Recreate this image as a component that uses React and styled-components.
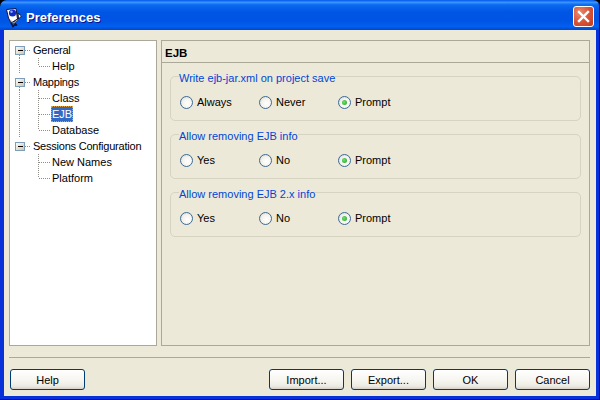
import React from 'react';
import styled, { createGlobalStyle } from 'styled-components';

const GlobalStyle = createGlobalStyle`
  html, body {
    margin: 0;
    padding: 0;
    background: #000;
    overflow: hidden;
  }
`;

const Window = styled.div`
  position: relative;
  width: 600px;
  height: 400px;
  display: flex;
  flex-direction: column;
  font-family: "Liberation Sans", Arial, sans-serif;
  font-size: 11px;
  color: #000;
  box-sizing: border-box;
  &::after {
    content: '';
    position: absolute;
    inset: 0;
    pointer-events: none;
    border-radius: 7px 7px 0 0;
    box-shadow: inset -1px -1px 0 #00138c;
  }
`;

const TitleBar = styled.div`
  height: 30px;
  flex: none;
  display: flex;
  align-items: center;
  padding: 3px 6px 0 6px;
  box-sizing: border-box;
  border-radius: 7px 7px 0 0;
  background: linear-gradient(180deg, #0058ee 0%, #3a93ff 8%, #0a6af0 16%, #0055e5 40%, #0054e3 70%, #0060f0 88%, #0046cf 100%);
`;

const TitleText = styled.div`
  margin-left: 4px;
  padding-top: 1px;
  flex: 1;
  color: #fff;
  font: bold 13px "Liberation Sans", Arial, sans-serif;
  text-shadow: 1px 1px 0 #0f1089;
`;

const CloseButton = styled.div`
  width: 21px;
  height: 21px;
  box-sizing: border-box;
  border: 1px solid #fff;
  border-radius: 3px;
  display: flex;
  align-items: center;
  justify-content: center;
  background: radial-gradient(circle at 30% 30%, #ec8a6c 0%, #d8553a 50%, #c23a1c 100%);
`;

const WindowBody = styled.div`
  flex: 1;
  display: flex;
  flex-direction: column;
  background: #ece9d8;
  border-style: solid;
  border-color: #0831d9;
  border-width: 0 4px 4px 4px;
  padding: 10px 6px 7px 5px;
  min-height: 0;
`;

const Panes = styled.div`
  display: flex;
  gap: 4px;
  height: 306px;
  flex: none;
`;

const TreePane = styled.div`
  width: 148px;
  flex: none;
  box-sizing: border-box;
  background: #fff;
  border: 1px solid #aca899;
  padding-top: 1px;
`;

const TreeRow = styled.div`
  display: flex;
  align-items: center;
  height: 16px;
`;

const TreeLabel = styled.span`
  padding: 1px 1px 0;
  height: 16px;
  line-height: 15px;
  box-sizing: border-box;
  white-space: nowrap;
  letter-spacing: ${(p) => (p.$parent ? '-0.22px' : '0')};
  ${(p) => p.$selected && `
    background: #316ac5;
    color: #fff;
    outline: 1px dotted #e0a040;
    outline-offset: -1px;
  `}
`;

const DetailPane = styled.div`
  flex: 1;
  display: flex;
  flex-direction: column;
  box-sizing: border-box;
  border: 1px solid #aca899;
  min-width: 0;
`;

const DetailHeader = styled.div`
  height: 22px;
  flex: none;
  box-sizing: border-box;
  border-bottom: 1px solid #aca899;
  padding: 1px 0 0 3px;
  line-height: 22px;
  font-weight: bold;
  font-size: 11.5px;
`;

const DetailContent = styled.div`
  display: flex;
  flex-direction: column;
  gap: 5px;
  padding: 5px 8px 0 8px;
`;

const Group = styled.fieldset`
  margin: 0;
  padding: 11px 0 0 9px;
  height: 53px;
  box-sizing: border-box;
  border: 1px solid #d6d3c0;
  border-radius: 5px;
  display: grid;
  grid-template-columns: repeat(3, 79px);
  align-items: start;
  align-content: start;
`;

const GroupTitle = styled.legend`
  padding: 4px 0 0;
  margin-left: -1px;
  height: 17px;
  box-sizing: border-box;
  line-height: 13px;
  color: #0046d5;
`;

const RadioItem = styled.div`
  display: flex;
  align-items: center;
  gap: 4px;
  height: 13px;
`;

const RadioLabel = styled.span`
  padding-bottom: 2px;
`;

const RadioDot = styled.span`
  width: 13px;
  height: 13px;
  flex: none;
  box-sizing: border-box;
  border: 1px solid #3c6a96;
  border-radius: 50%;
  background: radial-gradient(circle at 60% 60%, #fff 0%, #f4f3ee 50%, #d4d2c8 100%);
  display: flex;
  align-items: center;
  justify-content: center;
  &::after {
    content: '';
    display: ${(p) => (p.$checked ? 'block' : 'none')};
    width: 5px;
    height: 5px;
    border-radius: 50%;
    background: radial-gradient(circle at 40% 40%, #6fe06f, #21a121);
  }
`;

const Separator = styled.div`
  height: 1px;
  flex: none;
  margin-top: 11px;
  background: #aca899;
`;

const ButtonBar = styled.div`
  display: flex;
  gap: 7px;
  padding: 11px 0 0 1px;
`;

const Spacer = styled.div`
  flex: 1;
`;

const Button = styled.div`
  width: 75px;
  height: 21px;
  flex: none;
  box-sizing: border-box;
  border: 1px solid #003c74;
  border-radius: 3px;
  background: linear-gradient(180deg, #fff 0%, #f6f5ef 55%, #ecebe3 85%, #d6d0c5 100%);
  display: flex;
  align-items: center;
  justify-content: center;
`;

// tilted white sheet with a blue ball, dark hand at the foot
const AppIcon = () => (
  <svg width="16" height="20" viewBox="0 0 16 20" style={{ flex: 'none', marginTop: 2 }}>
    <path d="M0.5 1.5 L10 0.5 L11.5 11 L5 15 L2.5 10 Z" fill="#fff" stroke="#10143c" strokeWidth="1" />
    <circle cx="6.5" cy="5" r="3.6" fill="#1428c8" />
    <circle cx="5.5" cy="3.8" r="1.2" fill="#8fb0ff" />
    <path d="M5 15 L7 18.5 L9.5 16 L11 17.5" stroke="#10143c" strokeWidth="1.6" fill="none" />
    <path d="M4 12 L8 15 L11 12" stroke="#9a9a9a" strokeWidth="1" fill="none" />
    <path d="M12 5 L15.5 8 L12.5 11 Z" fill="#fff" stroke="#10143c" strokeWidth="1" />
  </svg>
);

const CloseIcon = () => (
  <svg width="13" height="13" viewBox="0 0 13 13">
    <path d="M2 2 L11 11 M11 2 L2 11" stroke="#fff" strokeWidth="2.4" strokeLinecap="square" />
  </svg>
);

const DOT = '#8f8f88';

// parent row: expander box, dotted stub, and the spine running down to the next parent
const ParentBranch = ({ spine }) => (
  <svg width="22" height="16" viewBox="0 0 22 16" style={{ flex: 'none' }}>
    {spine && <line x1="9.5" y1="13" x2="9.5" y2="16" stroke={DOT} strokeDasharray="1 1" />}
    <line x1="15" y1="8.5" x2="20" y2="8.5" stroke={DOT} strokeDasharray="1 1" />
    <defs>
      <linearGradient id="exp" x1="0" y1="0" x2="1" y2="1">
        <stop offset="0" stopColor="#fff" />
        <stop offset="1" stopColor="#c8c4b0" />
      </linearGradient>
    </defs>
    <rect x="5.5" y="4.5" width="9" height="8" fill="url(#exp)" stroke="#7f9db9" />
    <rect x="8" y="8" width="5" height="1" fill="#000" />
  </svg>
);

const ChildBranch = ({ spine, last }) => (
  <svg width="41" height="16" viewBox="0 0 41 16" style={{ flex: 'none' }}>
    {spine && <line x1="9.5" y1="0" x2="9.5" y2="16" stroke={DOT} strokeDasharray="1 1" />}
    <line x1="28.5" y1="0" x2="28.5" y2={last ? 8 : 16} stroke={DOT} strokeDasharray="1 1" />
    <line x1="29" y1="8.5" x2="40" y2="8.5" stroke={DOT} strokeDasharray="1 1" />
  </svg>
);

const tree = [
  { label: 'General', spine: true, children: ['Help'] },
  { label: 'Mappings', spine: true, children: ['Class', 'EJB', 'Database'] },
  { label: 'Sessions Configuration', spine: false, children: ['New Names', 'Platform'] },
];

const groups = [
  { title: 'Write ejb-jar.xml on project save', options: ['Always', 'Never', 'Prompt'] },
  { title: 'Allow removing EJB info', options: ['Yes', 'No', 'Prompt'] },
  { title: 'Allow removing EJB 2.x info', options: ['Yes', 'No', 'Prompt'] },
];

function App() {
  return (
    <Window>
      <GlobalStyle />
      <TitleBar>
        <AppIcon />
        <TitleText>Preferences</TitleText>
        <CloseButton>
          <CloseIcon />
        </CloseButton>
      </TitleBar>
      <WindowBody>
        <Panes>
          <TreePane>
            {tree.map((node) => (
              <React.Fragment key={node.label}>
                <TreeRow>
                  <ParentBranch spine={node.spine} />
                  <TreeLabel $parent>{node.label}</TreeLabel>
                </TreeRow>
                {node.children.map((child, i) => (
                  <TreeRow key={child}>
                    <ChildBranch spine={node.spine} last={i === node.children.length - 1} />
                    <TreeLabel $selected={child === 'EJB'}>{child}</TreeLabel>
                  </TreeRow>
                ))}
              </React.Fragment>
            ))}
          </TreePane>
          <DetailPane>
            <DetailHeader>EJB</DetailHeader>
            <DetailContent>
              {groups.map((group) => (
                <Group key={group.title}>
                  <GroupTitle>{group.title}</GroupTitle>
                  {group.options.map((option) => (
                    <RadioItem key={option}>
                      <RadioDot $checked={option === 'Prompt'} />
                      <RadioLabel>{option}</RadioLabel>
                    </RadioItem>
                  ))}
                </Group>
              ))}
            </DetailContent>
          </DetailPane>
        </Panes>
        <Separator />
        <ButtonBar>
          <Button>Help</Button>
          <Spacer />
          <Button>Import...</Button>
          <Button>Export...</Button>
          <Button>OK</Button>
          <Button>Cancel</Button>
        </ButtonBar>
      </WindowBody>
    </Window>
  );
}

export default App;
